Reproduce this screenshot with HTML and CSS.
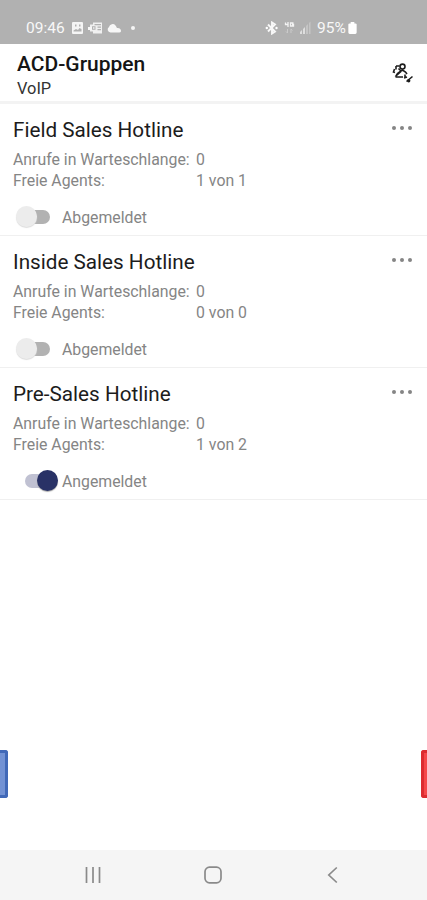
FILE: index.html
```html
<!DOCTYPE html>
<html lang="de">
<head>
<meta charset="utf-8">
<title>ACD-Gruppen</title>
<link rel="stylesheet" href="styles.css">
</head>
<body>
<div class="screen">
  <div class="status">
    <span class="time">09:46</span>
    <svg class="status-left" width="70" height="14" viewBox="0 0 70 14">
      <path fill="#f5f5f5" fill-rule="evenodd" d="M3 1h9a1 1 0 0 1 1 1v10a1 1 0 0 1-1 1H3a1 1 0 0 1-1-1V2a1 1 0 0 1 1-1zM3.500 10.500h8V8l-2-1-1.500 2-2-1-2.500 1.500zM5 3.500v2h1.500v-2zM9 3.500v2h1.500v-2z"/>
      <path fill="#f0f0f0" fill-rule="evenodd" d="M23 1.500h9v11h-9v-2h-3v-7h3zM24.500 3v1.200H31V3zM27.500 5.500v1.300H31V5.500zM27.500 8v1.300H31V8zM22 5.200v3.600h3.500V5.200zM23 6.200h1.500v1.600H23z"/>
      <path fill="#f7f7f7" d="M18 6h4v3h-4zM40.500 11.500a3 3 0 0 1-1.500-5.500 3.700 3.700 0 0 1 6.500-1.500c1 1 1 2 1.500 2.500 2-.5 4 1 4 2.800 0 1-.5 1.700-1.500 1.700z"/>
      <circle cx="63" cy="7" r="2" fill="#f5f5f5"/>
    </svg>
    <svg class="status-right" width="47" height="14" viewBox="0 0 47 14">
      <path fill="none" stroke="#f8f8f8" stroke-width="1.900" d="M3 3.500l7 7-3 2V1.500l3 2-7 7"/>
      <circle cx="1.800" cy="7" r="1.200" fill="#fff"/><circle cx="11.500" cy="7" r="1.200" fill="#fff"/>
      <path fill="none" stroke="#f3f3f3" stroke-width="1.300" d="M20.500 1.500v2h3M23 1v5M28.500 2h-3v3h3V3.500h-1.500"/>
      <path fill="none" stroke="#cacaca" d="M22.500 8v4L21 10.500M26 12V8l1.500 1.500"/>
      <path fill="#dedede" d="M35 13v-2l2-2v4zM38 13V8l2-2v7z"/>
      <path fill="#c5c5c5" d="M41 13V5l2-2v10zM44 13V2l1.500-1.500V13z"/>
    </svg>
    <span class="percent">95%</span>
    <svg class="battery" width="9" height="12" viewBox="0 0 9 13"><path fill="#fff" d="M2.500 0h4v1.500h1Q9 1.500 9 2.500v9q0 1.500-1.500 1.500h-6q-1.500 0-1.500-1.500v-9q0-1 1.500-1h1z"/></svg>
  </div>
  <header class="header">
    <div>
      <h1>ACD-Gruppen</h1>
      <p>VoIP</p>
    </div>
    <svg class="agents" width="22" height="22" viewBox="0 0 22 22" fill="none" stroke="#1c1c1c" stroke-width="1.600">
      <path d="M7.500 3H4M4 3v3.500M2.500 6L1.500 9l1.500.5"/>
      <circle cx="10.500" cy="3.600" r="2.500"/>
      <path d="M6.500 5.500l2 2M3.500 13.800q1-3.300 4-4.800l3-2 3 2 1.500 2M3.500 14H11M9 8.500L4.500 12.500"/>
      <path d="M13 11.500v3.500M12 15l3-1M14.500 18.500l6-5"/>
      <circle cx="16.700" cy="17.800" r="1.700" fill="#1c1c1c" stroke="none"/>
    </svg>
  </header>
  <main>
    <section class="group">
      <div class="title"><h2>Field Sales Hotline</h2><span class="more"><i></i><i></i><i></i></span></div>
      <dl><dt>Anrufe in Warteschlange:</dt><dd>0</dd><dt>Freie Agents:</dt><dd>1 von 1</dd></dl>
      <div class="login"><span class="switch"></span><span>Abgemeldet</span></div>
    </section>
    <section class="group">
      <div class="title"><h2>Inside Sales Hotline</h2><span class="more"><i></i><i></i><i></i></span></div>
      <dl><dt>Anrufe in Warteschlange:</dt><dd>0</dd><dt>Freie Agents:</dt><dd>0 von 0</dd></dl>
      <div class="login"><span class="switch"></span><span>Abgemeldet</span></div>
    </section>
    <section class="group">
      <div class="title"><h2>Pre-Sales Hotline</h2><span class="more"><i></i><i></i><i></i></span></div>
      <dl><dt>Anrufe in Warteschlange:</dt><dd>0</dd><dt>Freie Agents:</dt><dd>1 von 2</dd></dl>
      <div class="login"><span class="switch on"></span><span>Angemeldet</span></div>
    </section>
  </main>
  <div class="edges"><span class="edge blue"></span><span class="edge red"></span></div>
  <nav class="nav">
    <svg width="20" height="20" viewBox="0 0 20 20" stroke="#8a8a8a" stroke-width="1.700"><path d="M3.500 2v16M10 2v16M16.500 2v16"/></svg>
    <svg width="20" height="20" viewBox="0 0 20 20" fill="none" stroke="#8a8a8a" stroke-width="1.700"><rect x="2" y="2.200" width="16" height="15.600" rx="4.500"/></svg>
    <svg width="20" height="20" viewBox="0 0 20 20" fill="none" stroke="#8a8a8a" stroke-width="1.700"><path d="M14.800 2.500L6.800 10l8 7.500"/></svg>
  </nav>
</div>
</body>
</html>
```

FILE: styles.css
```css
* { box-sizing: border-box; margin: 0; padding: 0; }
body { font-family: Roboto, sans-serif; background: #fff; }
.screen { width: 427px; height: 900px; display: flex; flex-direction: column; overflow: hidden; background: #fff; }
.status { height: 44px; background: #b1b1b1; display: flex; align-items: center; padding: 11px 0 0 26px; color: #f8f8f8; font-size: 15.5px; }
.time { width: 44px; }
.status-right { margin-left: 125px; }
.percent { margin-left: 5px; width: 31px; white-space: nowrap; }
.header { height: 60px; border-bottom: 3px solid #f3f3f3; display: flex; justify-content: space-between; padding: 8px 13px 0 17px; color: #151515; }
.header h1 { font-size: 21px; line-height: 25px; font-weight: 500; }
.header p { font-size: 16.4px; line-height: 24px; color: #333; }
.agents { margin-top: 11px; }
.group { height: 132px; border-bottom: 1px solid #f0f0f0; padding: 12px 15px 0 13px; }
.title { height: 28px; display: flex; justify-content: space-between; }
h2 { font-size: 20.7px; line-height: 28px; font-weight: 400; color: #1c1c1c; }
.more { display: flex; gap: 4px; padding-top: 10px; }
.more i { width: 4px; height: 4px; border-radius: 50%; background: #858585; }
dl { display: grid; grid-template-columns: 183px 1fr; grid-auto-rows: 21px; margin-top: 5px; font-size: 15.85px; line-height: 21px; color: #858585; }
.login { display: flex; align-items: center; height: 24px; margin: 14px 0 0 2px; font-size: 15.8px; color: #858585; }
.switch { position: relative; width: 35px; height: 22px; margin-right: 12px; }
.switch::before { content: ""; position: absolute; left: 8px; top: 4px; width: 27px; height: 14px; border-radius: 7px; background: #b2b2b2; }
.switch::after { content: ""; position: absolute; left: 1px; top: 0; width: 21px; height: 21px; border-radius: 50%; background: #ececec; box-shadow: 0 1px 1px #ddd; }
.switch.on::before { left: 10px; background: #c0c1d2; }
.switch.on::after { left: 21.500px; background: #293266; box-shadow: 0 1px 1px #aaa; }
.edges { height: 48px; margin-top: 250px; display: flex; justify-content: space-between; }
.edge { height: 48px; }
.blue { width: 8px; background: #7292d4; border: 3px solid #4169b8; border-left: 0; border-radius: 0 3px 3px 0; }
.red { width: 6px; background: #f5474a; border: 3px solid #dc2b30; border-right: 0; border-radius: 3px 0 0 3px; }
.nav { height: 50px; margin-top: auto; background: #f5f5f5; display: flex; align-items: center; gap: 99.500px; padding-left: 83px; }
```
